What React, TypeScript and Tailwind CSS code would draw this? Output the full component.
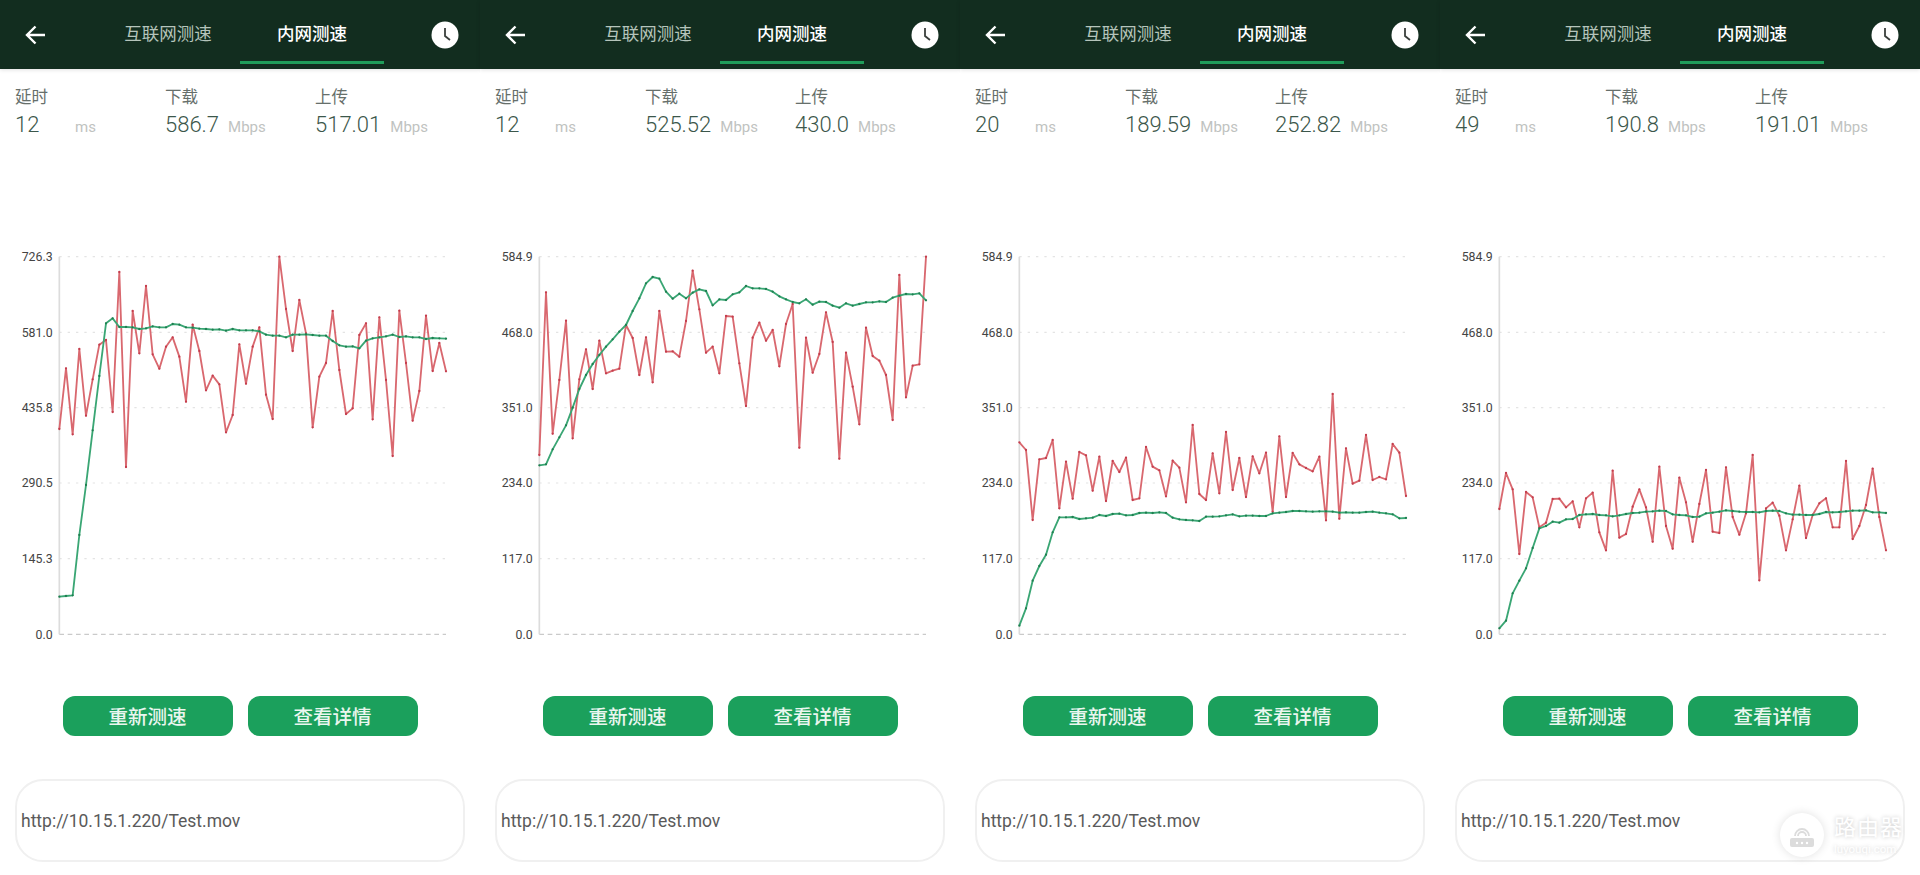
const font = "font-['Roboto','Noto_Sans_CJK_SC',sans-serif]";

// chart points are read off the picture at 3x, one every 20 units starting at x=178
const panels = [
  {
    latency: "12",
    down: "586.7",
    up: "517.01",
    labels: ["726.3", "581.0", "435.8", "290.5", "145.3", "0.0"],
    red: [567, 385, 583, 327, 527, 418, 314, 300, 516, 96, 681, 213, 340, 138, 343, 386, 320, 292, 350, 485, 254, 333, 451, 407, 433, 577, 525, 313, 431, 320, 262, 464, 537, 50, 207, 333, 180, 280, 562, 410, 369, 213, 390, 522, 505, 285, 250, 538, 232, 420, 648, 212, 369, 542, 453, 227, 393, 309, 394],
    green: [1070, 1068, 1066, 885, 735, 571, 408, 250, 235, 261, 261, 262, 267, 265, 259, 262, 262, 252, 254, 262, 263, 266, 267, 269, 268, 272, 267, 271, 271, 271, 274, 284, 287, 287, 292, 284, 284, 283, 285, 287, 287, 303, 316, 320, 319, 325, 302, 295, 292, 289, 284, 291, 289, 292, 292, 297, 294, 295, 296],
  },
  {
    latency: "12",
    down: "525.52",
    up: "430.0",
    labels: ["584.9", "468.0", "351.0", "234.0", "117.0", "0.0"],
    red: [645, 157, 581, 420, 242, 595, 418, 328, 447, 302, 400, 392, 386, 255, 294, 405, 292, 427, 213, 335, 334, 350, 243, 92, 208, 338, 320, 400, 228, 230, 370, 498, 293, 248, 302, 270, 379, 252, 192, 623, 293, 398, 342, 217, 306, 656, 338, 440, 553, 263, 348, 362, 405, 540, 105, 472, 377, 373, 50],
    green: [676, 673, 628, 592, 556, 503, 447, 405, 372, 345, 320, 298, 275, 255, 213, 175, 130, 111, 116, 155, 176, 161, 175, 158, 148, 153, 196, 178, 180, 163, 157, 138, 145, 145, 147, 155, 169, 178, 186, 190, 178, 194, 185, 186, 197, 203, 190, 197, 192, 187, 187, 184, 186, 173, 167, 162, 163, 160, 181],
  },
  {
    latency: "20",
    down: "189.59",
    up: "252.82",
    labels: ["584.9", "468.0", "351.0", "234.0", "117.0", "0.0"],
    red: [607, 630, 840, 658, 654, 600, 805, 665, 776, 636, 646, 752, 650, 783, 663, 696, 653, 780, 775, 621, 680, 691, 769, 662, 683, 787, 555, 762, 780, 640, 760, 576, 750, 654, 771, 649, 700, 638, 815, 589, 771, 639, 673, 684, 694, 650, 841, 462, 836, 625, 731, 722, 585, 720, 711, 718, 612, 638, 768],
    green: [1157, 1105, 1022, 978, 944, 877, 832, 832, 831, 837, 835, 833, 825, 828, 822, 821, 826, 825, 819, 818, 819, 817, 819, 833, 838, 840, 841, 843, 830, 830, 829, 826, 823, 829, 827, 827, 828, 828, 820, 818, 816, 813, 813, 814, 815, 814, 814, 815, 818, 817, 818, 818, 816, 815, 818, 820, 823, 835, 834],
  },
  {
    latency: "49",
    down: "190.8",
    up: "191.01",
    labels: ["584.9", "468.0", "351.0", "234.0", "117.0", "0.0"],
    red: [807, 699, 748, 942, 756, 772, 862, 848, 777, 776, 802, 784, 862, 775, 758, 877, 931, 692, 893, 882, 800, 748, 802, 905, 680, 858, 926, 713, 787, 905, 792, 690, 875, 879, 682, 831, 884, 820, 645, 1021, 805, 788, 827, 931, 838, 737, 894, 825, 790, 775, 862, 862, 663, 897, 858, 795, 686, 831, 931],
    green: [1165, 1142, 1060, 1022, 985, 924, 865, 858, 845, 848, 838, 837, 825, 823, 822, 825, 826, 829, 826, 822, 819, 818, 815, 814, 812, 813, 823, 825, 826, 831, 830, 820, 818, 815, 811, 813, 815, 816, 816, 817, 813, 812, 813, 820, 824, 824, 825, 825, 822, 816, 817, 816, 814, 812, 812, 811, 817, 817, 819],
  },
];

const gridY = [50, 277, 503, 729, 956, 1183];

function Series({ values, line, dot }: { values: number[]; line: string; dot: string }) {
  const points = values.map((y, i) => `${178 + i * 20},${y}`).join(" ");
  return (
    <g>
      <polyline points={points} fill="none" stroke={line} strokeWidth={5.5} strokeLinejoin="round" />
      {values.map((y, i) => (
        <circle key={i} cx={178 + i * 20} cy={y} r={3.4} fill={dot} />
      ))}
    </g>
  );
}

function Chart({ labels, red, green }: { labels: string[]; red: number[]; green: number[] }) {
  return (
    <svg viewBox="0 0 1440 1230" className="mt-[100px] block h-[410px] w-[480px]">
      {gridY.slice(0, 5).map((y) => (
        <line key={y} x1={178} x2={1338} y1={y} y2={y} stroke="#e4e4e4" strokeWidth={3.5} strokeDasharray="7 18" />
      ))}
      <line x1={178} x2={1338} y1={1183} y2={1183} stroke="#cacaca" strokeWidth={3.5} strokeDasharray="14 11" />
      <line x1={178} x2={178} y1={50} y2={1183} stroke="#dcdcdc" strokeWidth={5} />
      {labels.map((label, i) => (
        <text key={label} x={158} y={gridY[i] + 13} textAnchor="end" fontSize={37} fill="#444444" fontFamily="Roboto, sans-serif">
          {label}
        </text>
      ))}
      <Series values={red} line="#d9686f" dot="#c43d4d" />
      <Series values={green} line="#3aa674" dot="#1f7f50" />
    </svg>
  );
}

function Stat({ label, value, unit, minWidth }: { label: string; value: string; unit: string; minWidth?: string }) {
  return (
    <div className="w-[150px]">
      <div className="text-[16.5px] leading-[22px] text-[#666f6b]">{label}</div>
      <div className="flex h-[31px] items-baseline leading-[31px]">
        <span className={`text-[22px] font-light text-[#3c574b] ${minWidth ?? ""}`}>{value}</span>
        <span className="ml-[9px] text-[15px] text-[#bfc3c1]">{unit}</span>
      </div>
    </div>
  );
}

function Panel({ panel }: { panel: (typeof panels)[number] }) {
  return (
    <div className="flex h-[875px] w-[480px] flex-col bg-white">
      <header className="flex h-[69px] items-stretch bg-[#122d1f] pl-[25px] shadow-[0_1px_4px_rgba(0,0,0,0.12)]">
        <svg viewBox="0 0 20 20" fill="none" stroke="white" strokeWidth={2.4} className="h-5 w-5 self-center">
          <path d="M20 10H2M10.5 1.5 2 10l8.5 8.5" />
        </svg>
        <div className="ml-[51px] flex h-[64px] text-[17.5px]">
          <div className="flex w-[144px] items-center justify-center pt-[7px] pb-[3px] text-[#b5c4bb]">互联网测速</div>
          <div className="flex w-[144px] items-center justify-center border-b-[3px] border-[#1f9d5a] pt-[7px] font-medium text-white">内网测速</div>
        </div>
        <svg viewBox="0 0 28 28" className="ml-[47px] h-7 w-7 self-center">
          <circle cx="14" cy="14" r="13.5" fill="white" />
          <path d="M14 7v8l5 4" fill="none" stroke="#3a3f3c" strokeWidth="1.8" />
        </svg>
      </header>

      <div className="flex pt-[18px] pl-[15px]">
        <Stat label="延时" value={panel.latency} unit="ms" minWidth="min-w-[51px]" />
        <Stat label="下载" value={panel.down} unit="Mbps" />
        <Stat label="上传" value={panel.up} unit="Mbps" />
      </div>

      <Chart labels={panel.labels} red={panel.red} green={panel.green} />

      <div className="mt-[46px] flex justify-center gap-[15px]">
        <button type="button" className="h-10 w-[170px] rounded-xl bg-[#1ba05c] pt-[3px] text-[19.5px] font-medium text-[#eaf6ef]">
          重新测速
        </button>
        <button type="button" className="h-10 w-[170px] rounded-xl bg-[#1ba05c] pt-[3px] text-[19.5px] font-medium text-[#eaf6ef]">
          查看详情
        </button>
      </div>

      <div className="mx-[15px] mt-[43px] flex h-[83px] items-center rounded-[28px] border-2 border-[#f0f0f0] pt-[2px] pl-[4px] text-[17.5px] text-[#5a5a5a]">
        http://10.15.1.220/Test.mov
      </div>
    </div>
  );
}

function Watermark() {
  return (
    <div className="absolute top-[813px] left-[1780px] flex items-center gap-[10px] text-white">
      <div className="flex h-11 w-11 items-center justify-center rounded-full bg-white shadow-[0_0_10px_rgba(0,0,0,0.12)]">
        <svg viewBox="0 0 32 32" className="h-8 w-8" fill="#dcdcdc">
          <path d="M6 19h20a2 2 0 0 1 2 2v5a2 2 0 0 1-2 2H6a2 2 0 0 1-2-2v-5a2 2 0 0 1 2-2z" />
          <path d="M9 17a7 7 0 0 1 14 0M12 17a4 4 0 0 1 8 0" fill="none" stroke="#dcdcdc" strokeWidth="1.8" />
          <circle cx="11" cy="24" r="1.2" fill="white" />
          <circle cx="16" cy="24" r="1.2" fill="white" />
          <circle cx="21" cy="24" r="1.2" fill="white" />
        </svg>
      </div>
      <div className="[text-shadow:0_0_4px_rgba(0,0,0,0.22)]">
        <div className="text-[22px] leading-[28px] tracking-[1px]">路由器</div>
        <div className="text-[11.5px] leading-[14px]">luyouqi.com</div>
      </div>
    </div>
  );
}

export default function App() {
  return (
    <div className={`relative flex h-[875px] w-[1920px] overflow-hidden bg-white ${font}`}>
      {panels.map((panel, i) => (
        <Panel key={i} panel={panel} />
      ))}
      <Watermark />
    </div>
  );
}
